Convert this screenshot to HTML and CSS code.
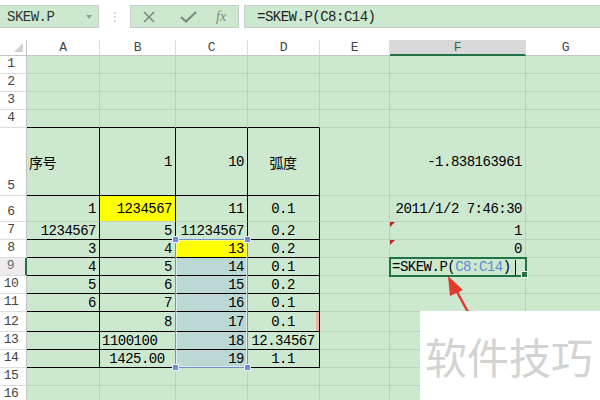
FILE: index.html
```html
<!DOCTYPE html>
<html lang="zh-CN">
<head>
    <meta charset="UTF-8">
    <title>SKEW.P</title>
    <link rel="stylesheet" href="styles.css">
</head>
<body>

<div class="toolbar">
    <div class="namebox"><span>SKEW.P</span><span class="drop"></span></div>
    <div class="grip">⋮</div>
    <div class="tools">
        <svg class="ico-x" width="12" height="12" viewBox="0 0 12 12"><path d="M1 1L11 11M11 1L1 11" stroke="#7b8a7e" stroke-width="1.6" fill="none"/></svg>
        <svg class="ico-ok" width="17" height="12" viewBox="0 0 17 12"><path d="M1 6L6 10.5L16 1" stroke="#7b8a7e" stroke-width="2.2" fill="none"/></svg>
        <span class="fx">fx</span>
    </div>
    <div class="formula">=SKEW.P(C8:C14)</div>
</div>

<div class="sheet">
    <div class="corner"></div>
    <div class="ch">A</div><div class="ch">B</div><div class="ch">C</div><div class="ch">D</div><div class="ch">E</div><div class="ch on">F</div><div class="ch">G</div>

    <div class="rh">1</div><div class="c"></div><div class="c"></div><div class="c"></div><div class="c"></div><div class="c"></div><div class="c"></div><div class="c"></div>
    <div class="rh">2</div><div class="c"></div><div class="c"></div><div class="c"></div><div class="c"></div><div class="c"></div><div class="c"></div><div class="c"></div>
    <div class="rh">3</div><div class="c"></div><div class="c"></div><div class="c"></div><div class="c"></div><div class="c"></div><div class="c"></div><div class="c"></div>
    <div class="rh">4</div><div class="c kb"></div><div class="c kb"></div><div class="c kb"></div><div class="c kb"></div><div class="c"></div><div class="c"></div><div class="c"></div>

    <div class="rh">5</div>
    <div class="c kr kb">序号</div>
    <div class="c r kr kb">1</div>
    <div class="c r kr kb">10</div>
    <div class="c m kr kb">弧度</div>
    <div class="c"></div>
    <div class="c r">-1.838163961</div>
    <div class="c"></div>

    <div class="rh">6</div>
    <div class="c r kr">1</div>
    <div class="c r kr yel">1234567</div>
    <div class="c r kr">11</div>
    <div class="c m kr">0.1</div>
    <div class="c"></div>
    <div class="c r">2011/1/2 7:46:30</div>
    <div class="c"></div>

    <div class="rh">7</div>
    <div class="c r kr kb">1234567</div>
    <div class="c r kr kb">5</div>
    <div class="c r kr kb">11234567</div>
    <div class="c m kr kb">0.2</div>
    <div class="c"></div>
    <div class="c r flag">1</div>
    <div class="c"></div>

    <div class="rh">8</div>
    <div class="c r kr kb">3</div>
    <div class="c r kr kb">4</div>
    <div class="c r kr kb yel">13</div>
    <div class="c m kr kb">0.2</div>
    <div class="c"></div>
    <div class="c r flag">0</div>
    <div class="c"></div>

    <div class="rh on">9</div>
    <div class="c r kr kb">4</div>
    <div class="c r kr kb">5</div>
    <div class="c r kr kb sel">14</div>
    <div class="c m kr kb">0.1</div>
    <div class="c"></div>
    <div class="c edit">=SKEW.P(<span class="ref">C8:C14</span>)<span class="caret"></span><span class="fill"></span></div>
    <div class="c"></div>

    <div class="rh">10</div>
    <div class="c r kr kb">5</div>
    <div class="c r kr kb">6</div>
    <div class="c r kr kb sel">15</div>
    <div class="c m kr kb">0.2</div>
    <div class="c"></div><div class="c"></div><div class="c"></div>

    <div class="rh">11</div>
    <div class="c r kr kb">6</div>
    <div class="c r kr kb">7</div>
    <div class="c r kr kb sel">16</div>
    <div class="c m kr kb">0.1</div>
    <div class="c"></div><div class="c"></div><div class="c"></div>

    <div class="rh">12</div>
    <div class="c r kr kb"></div>
    <div class="c r kr kb">8</div>
    <div class="c r kr kb sel">17</div>
    <div class="c m kr kb mark">0.1</div>
    <div class="c"></div><div class="c"></div><div class="c"></div>

    <div class="rh">13</div>
    <div class="c kr kb"></div>
    <div class="c kr kb">1100100</div>
    <div class="c r kr kb sel">18</div>
    <div class="c m kr kb">12.34567</div>
    <div class="c"></div><div class="c"></div><div class="c"></div>

    <div class="rh">14</div>
    <div class="c kr kb"></div>
    <div class="c m kr kb">1425.00</div>
    <div class="c r kr kb sel">19</div>
    <div class="c m kr kb">1.1</div>
    <div class="c"></div><div class="c"></div><div class="c"></div>

    <div class="rh">15</div><div class="c"></div><div class="c"></div><div class="c"></div><div class="c"></div><div class="c"></div><div class="c"></div><div class="c"></div>
    <div class="rh">16</div><div class="c"></div><div class="c"></div><div class="c"></div><div class="c"></div><div class="c"></div><div class="c"></div><div class="c"></div>

    <!-- selected range C8:C14 -->
    <div class="range">
        <span class="h tl"></span><span class="h tr"></span><span class="h bl"></span><span class="h br"></span>
    </div>
</div>

<svg class="arrow" width="600" height="400" viewBox="0 0 600 400">
    <line x1="468" y1="312" x2="456" y2="290" stroke="#e23a2e" stroke-width="2.5"/>
    <polygon points="448,276 463,290 450,296" fill="#e23a2e"/>
</svg>

<div class="stamp">软件技巧</div>

</body>
</html>
```

FILE: styles.css
```css
body {
    margin: 0;
    height: 400px;
    overflow: hidden;
    position: relative;
    background-color: #fff;
    font-family: "Liberation Mono", "Noto Sans CJK SC", monospace;
    font-size: 14px;
    letter-spacing: -0.5px;
    color: #000;
}
.toolbar {
    display: flex;
    align-items: center;
    height: 23px;
    padding: 5px 0 12px;
}
.namebox {
    box-sizing: border-box;
    width: 100px;
    height: 23px;
    margin-left: -1px;
    padding-left: 7px;
    display: flex;
    align-items: center;
    justify-content: space-between;
    background-color: #cce8cf;
    border: 1px solid #c6cec7;
    color: #333;
}
.drop {
    width: 0;
    height: 0;
    margin-right: 6px;
    border-left: 3.5px solid transparent;
    border-right: 3.5px solid transparent;
    border-top: 4px solid #9a9a9a;
}
.grip {
    width: 31px;
    text-align: center;
    color: #bdbdbd;
    font-family: "DejaVu Sans", sans-serif;
    font-size: 13px;
}
.tools {
    box-sizing: border-box;
    width: 109px;
    height: 23px;
    padding-left: 12px;
    display: flex;
    align-items: center;
    background-color: #cce8cf;
    border: 1px solid #c6cec7;
}
.ico-ok {
    margin-left: 25px;
}
.fx {
    margin-left: 19px;
    font-family: "Liberation Serif", serif;
    font-style: italic;
    font-size: 14px;
    letter-spacing: 0;
    color: #7b8a7e;
}
.formula {
    box-sizing: border-box;
    flex: 1;
    height: 23px;
    margin-left: 5px;
    margin-right: -1px;
    padding-left: 12px;
    display: flex;
    align-items: center;
    background-color: #cce8cf;
    border: 1px solid #c6cec7;
    color: #222;
}
.sheet {
    position: relative;
    display: grid;
    grid-template-columns: 27px 73px 76px 72px 72px 70px 136px 80px;
    grid-template-rows: 16px 18px 18px 18px 18px 68px 26px 18px 18px 18px 18px 18px 20px 18px 18px 18px 18px;
}
.corner {
    position: relative;
    background-color: #fff;
    border-right: 1px solid #c4c4c4;
    border-bottom: 1px solid #c4c4c4;
}
.corner::after {
    content: "";
    position: absolute;
    right: 3px;
    bottom: 3px;
    border-left: 9px solid transparent;
    border-bottom: 9px solid #d0d0d0;
}
.ch {
    display: flex;
    align-items: center;
    justify-content: center;
    background-color: #fff;
    border-right: 1px solid #dcdcdc;
    border-bottom: 1px solid #c4c4c4;
    color: #444;
    font-size: 13px;
}
.ch.on {
    background-color: #d9d9d9;
    border-bottom: 2px solid #217346;
    color: #2f6a45;
}
.rh {
    display: flex;
    align-items: flex-end;
    justify-content: center;
    padding: 0 4px 1px 0;
    background-color: #fff;
    border-right: 1px solid #c4c4c4;
    border-bottom: 1px solid #dcdcdc;
    color: #444;
    font-size: 13px;
    line-height: 16px;
}
.rh.on {
    background-color: #ececec;
    border-right: 2px solid #217346;
    color: #6b6b6b;
}
.c {
    display: flex;
    align-items: center;
    padding: 1px 3px 0 2px;
    white-space: nowrap;
    background-color: #cce8cf;
    border-right: 1px solid #b9d3bc;
    border-bottom: 1px solid #b9d3bc;
}
.r {
    justify-content: flex-end;
}
.m {
    justify-content: center;
}
.kr {
    border-right-color: #000;
}
.kb {
    border-bottom-color: #000;
}
.yel {
    background-color: #ffff00;
}
.sel {
    background-color: #bcd8d5;
}
.mark {
    box-shadow: inset -3px 0 0 #f1b3a3;
}
.flag {
    position: relative;
}
.flag::before {
    content: "";
    position: absolute;
    left: 0;
    top: 0;
    border-top: 5px solid #b8261d;
    border-right: 5px solid transparent;
}
.edit {
    position: relative;
    padding-left: 2px;
    outline: 2px solid #217346;
    outline-offset: -1px;
}
.ref {
    color: #5f8bd3;
}
.caret {
    width: 1px;
    height: 15px;
    margin-left: 4px;
    background-color: #000;
}
.fill {
    position: absolute;
    right: -3px;
    bottom: -3px;
    width: 5px;
    height: 5px;
    background-color: #217346;
    border: 1px solid #fff;
}
.range {
    position: absolute;
    grid-column: 4 / 5;
    grid-row: 9 / 16;
    top: -1px;
    left: -1px;
    right: 0;
    bottom: 0;
    border: 1px solid #6f8fd0;
    box-shadow: inset 0 0 0 1px rgba(255, 255, 255, 0.5);
}
.h {
    position: absolute;
    width: 5px;
    height: 5px;
    background-color: #6f8fd0;
    border: 1px solid #eef3fb;
}
.tl { left: -4px; top: -4px; }
.tr { right: -4px; top: -4px; }
.bl { left: -4px; bottom: -4px; }
.br { right: -4px; bottom: -4px; }
.arrow {
    position: absolute;
    left: 0;
    top: 0;
    pointer-events: none;
}
.stamp {
    position: absolute;
    left: 420px;
    top: 311px;
    width: 180px;
    height: 89px;
    padding-left: 5px;
    box-sizing: border-box;
    display: flex;
    align-items: center;
    background-color: #fff;
    font-family: "Noto Sans CJK SC", sans-serif;
    font-size: 42px;
    letter-spacing: 0;
    color: #d3d3d3;
}
```
